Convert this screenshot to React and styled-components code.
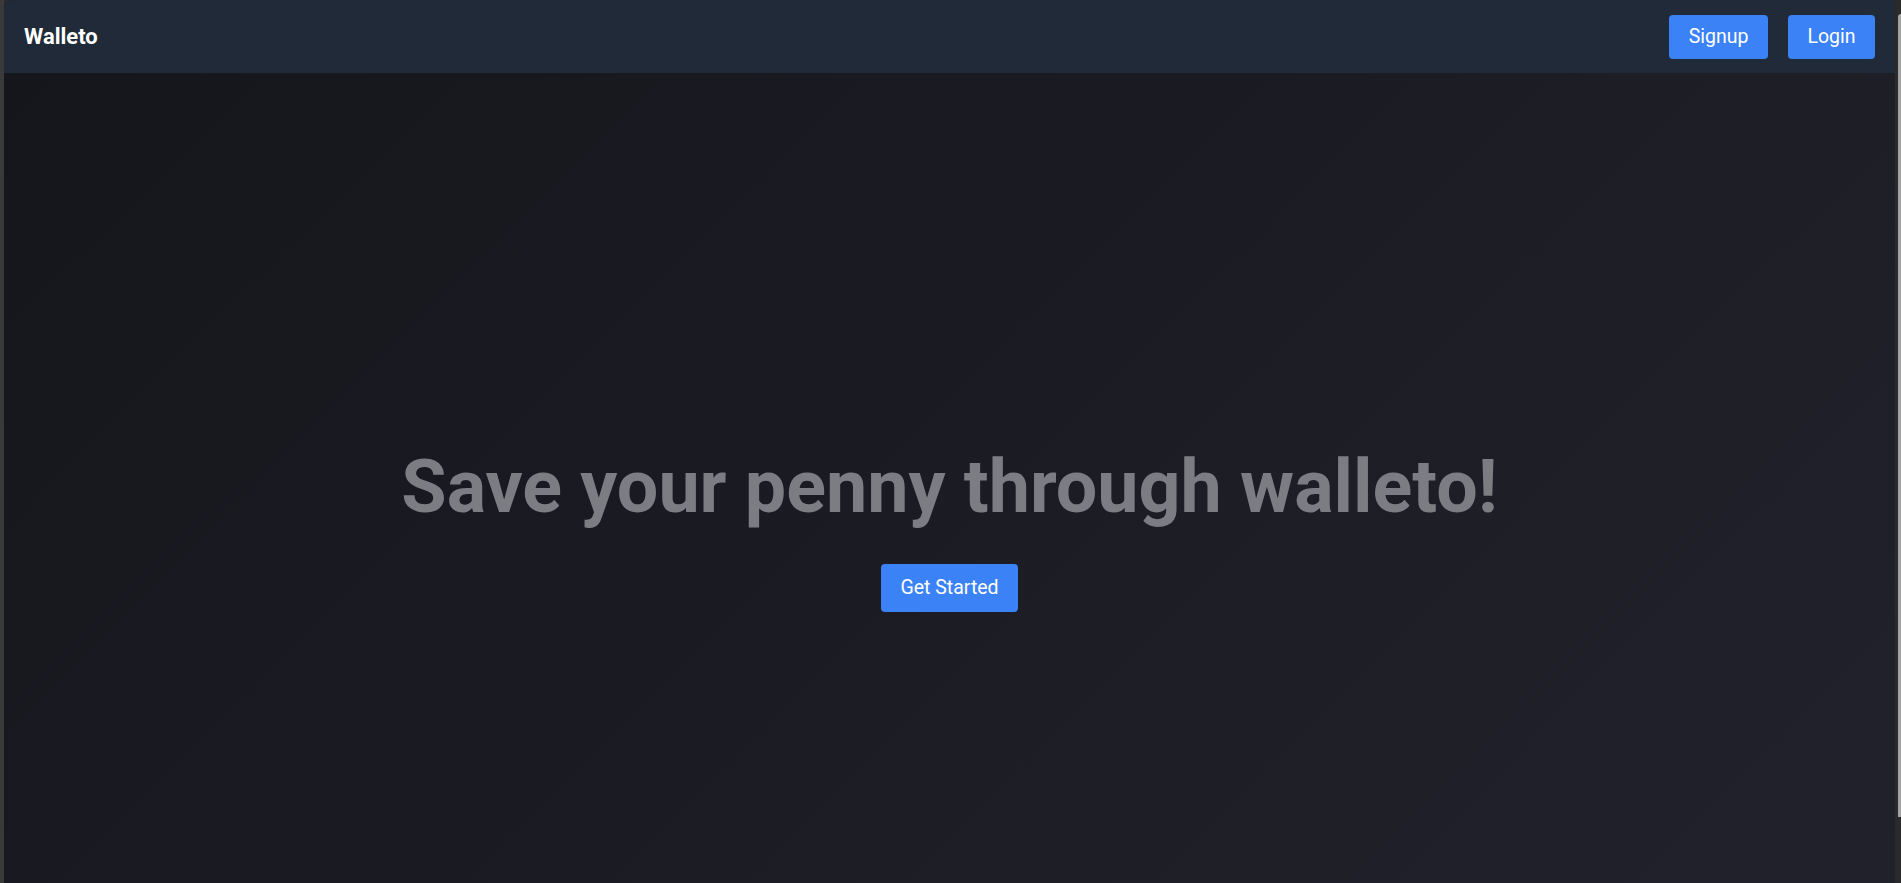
import React from "react";
import styled, { createGlobalStyle } from "styled-components";

const Global = createGlobalStyle`
  html, body { margin: 0; padding: 0; height: 100%; overflow: hidden; background: #2b2b2b; }
  #root { height: 100%; }
  * { box-sizing: border-box; }
`;

const Frame = styled.div`
  display: flex;
  height: 883px;
  background: #2c2c2c;
`;

const LeftEdge = styled.div`
  width: 4px;
  flex: none;
  background: #3a3a3a;
`;

const Page = styled.div`
  flex: 1;
  display: flex;
  flex-direction: column;
  border-top-left-radius: 8px;
  overflow: hidden;
  background: linear-gradient(135deg, #15161b 0%, #1b1c23 50%, #21212c 100%);
  font-family: Roboto, "Liberation Sans", sans-serif;
`;

const ScrollTrack = styled.div`
  width: 6px;
  flex: none;
  display: flex;
  justify-content: flex-end;
  background: #2a2a2a;
  padding-top: 14px;
`;

const ScrollThumb = styled.div`
  width: 3px;
  height: 803px;
  background: #a3a3a3;
  border-top-left-radius: 3px;
`;

const Header = styled.header`
  height: 73px;
  flex: none;
  display: flex;
  align-items: center;
  justify-content: space-between;
  padding: 0 20px;
  background: #212a38;
`;

const Brand = styled.div`
  color: #ffffff;
  font-weight: 700;
  font-size: 22px;
  line-height: 1;
  margin-top: 1px;
`;

const Nav = styled.nav`
  display: flex;
  gap: 20px;
  margin-top: 1px;
`;

const Button = styled.button`
  font-family: Roboto, "Liberation Sans", sans-serif;
  font-size: 19.5px;
  line-height: ${(p) => (p.$big ? "28px" : "26px")};
  color: #ffffff;
  background: #3b82f6;
  border: none;
  border-radius: 4px;
  padding: ${(p) => (p.$big ? "10px 19px" : "9px 19.5px")};
  cursor: pointer;
`;

const Hero = styled.main`
  flex: 1;
  display: flex;
  flex-direction: column;
  align-items: center;
  justify-content: center;
  padding-top: 107px;
`;

const Title = styled.h1`
  margin: 0 0 40px;
  font-size: 73.6px;
  line-height: 1;
  font-weight: 700;
  color: #7c7c83;
  letter-spacing: 0;
`;

export default function App() {
  return (
    <>
      <Global />
      <Frame>
        <LeftEdge />
        <Page>
          <Header>
            <Brand>Walleto</Brand>
            <Nav>
              <Button>Signup</Button>
              <Button>Login</Button>
            </Nav>
          </Header>
          <Hero>
            <Title>Save your penny through walleto!</Title>
            <Button $big>Get Started</Button>
          </Hero>
        </Page>
        <ScrollTrack>
          <ScrollThumb />
        </ScrollTrack>
      </Frame>
    </>
  );
}
